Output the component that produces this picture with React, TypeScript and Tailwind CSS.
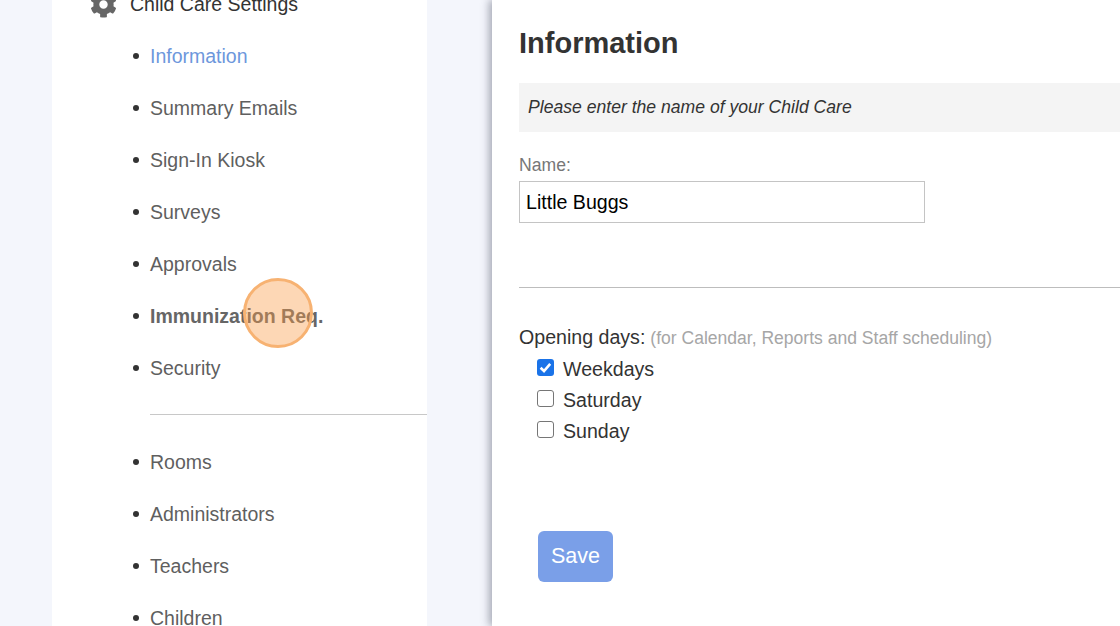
import { FaCog } from "react-icons/fa";

const font = { fontFamily: '"Liberation Sans", Arial, sans-serif' };

function Item({ label, className = "text-[#5f5f5f]" }: { label: string; className?: string }) {
  return (
    <li className="flex h-[52px] items-center">
      <span className="ml-[81px] mr-[11px] h-[6px] w-[6px] shrink-0 rounded-full bg-[#333333]" />
      <span className={`text-[19.5px] leading-[24px] ${className}`}>{label}</span>
    </li>
  );
}

function Check({ label, checked = false }: { label: string; checked?: boolean }) {
  return (
    <div className="flex h-[31px] items-center pl-[18px]">
      {checked ? (
        <span className="flex h-[17px] w-[17px] -translate-y-[1px] items-center justify-center rounded-[3px] bg-[#1a73e8]">
          <svg width="15" height="15" viewBox="0 0 15 15" fill="none">
            <path d="M2.6 7.8 6 11 12.2 3.8" stroke="white" strokeWidth="2.6" />
          </svg>
        </span>
      ) : (
        <span className="h-[17px] w-[17px] -translate-y-[1px] rounded-[3px] border border-[#767676] bg-white" />
      )}
      <span className="ml-[9px] text-[19.6px] leading-[24px] text-[#333333]">{label}</span>
    </div>
  );
}

export default function App() {
  return (
    <div style={font} className="relative flex h-[626px] w-[1120px] overflow-hidden bg-[#f4f6fc]">
      <aside className="ml-[52px] h-full w-[375px] shrink-0 overflow-hidden bg-white">
        <div className="-mt-[9px] flex h-[27px] items-center">
          <FaCog className="ml-[38px] h-[27px] w-[27px] text-[#666666]" />
          <span className="ml-[13px] -translate-y-[1px] text-[19.5px] leading-[24px] text-[#333333]">Child Care Settings</span>
        </div>
        <ul className="mt-[12px]">
          <Item label="Information" className="text-[#6d97dc]" />
          <Item label="Summary Emails" />
          <Item label="Sign-In Kiosk" />
          <Item label="Surveys" />
          <Item label="Approvals" />
          <Item label="Immunization Req." className="font-bold text-[#666666]" />
          <Item label="Security" />
        </ul>
        <div className="ml-[98px] mt-[20px] h-px bg-[#c8c8c8]" />
        <ul className="mt-[21px]">
          <Item label="Rooms" />
          <Item label="Administrators" />
          <Item label="Teachers" />
          <Item label="Children" />
        </ul>
      </aside>

      <main className="ml-[65px] h-full flex-1 bg-white pl-[27px] shadow-[-3px_0_8px_rgba(70,75,95,0.45)]">
        <h1 className="mt-[25px] text-[29px] font-bold leading-[36px] text-[#333333]">Information</h1>
        <div className="mt-[22px] flex h-[49px] items-center bg-[#f4f4f4] pl-[9px] text-[17.6px] italic text-[#333333]">
          Please enter the name of your Child Care
        </div>
        <div className="mt-[23px] text-[17.6px] leading-[20px] text-[#777777]">Name:</div>
        <div className="mt-[6px] flex h-[42px] w-[406px] items-center border border-[#c4c4c4] pl-[6px] pt-[2px] text-[19.6px] text-black">
          Little Buggs
        </div>
        <div className="mt-[64px] h-px bg-[#bdbdbd]" />
        <div className="mt-[37px] leading-[24px]">
          <span className="text-[19.6px] text-[#333333]">Opening days:</span>
          <span className="ml-[5px] text-[17.55px] text-[#a6a6a6]">(for Calendar, Reports and Staff scheduling)</span>
        </div>
        <div className="mt-[2px]">
          <Check label="Weekdays" checked />
          <Check label="Saturday" />
          <Check label="Sunday" />
        </div>
        <button className="ml-[19px] mt-[85px] h-[51px] w-[75px] rounded-[6px] bg-[#7a9fe8] text-[21.5px] text-white">
          Save
        </button>
      </main>

      <div className="absolute left-[243px] top-[278px] h-[70px] w-[70px] rounded-full border-[3px] border-[#f7b272] bg-[#fb9a45]/40" />
    </div>
  );
}
